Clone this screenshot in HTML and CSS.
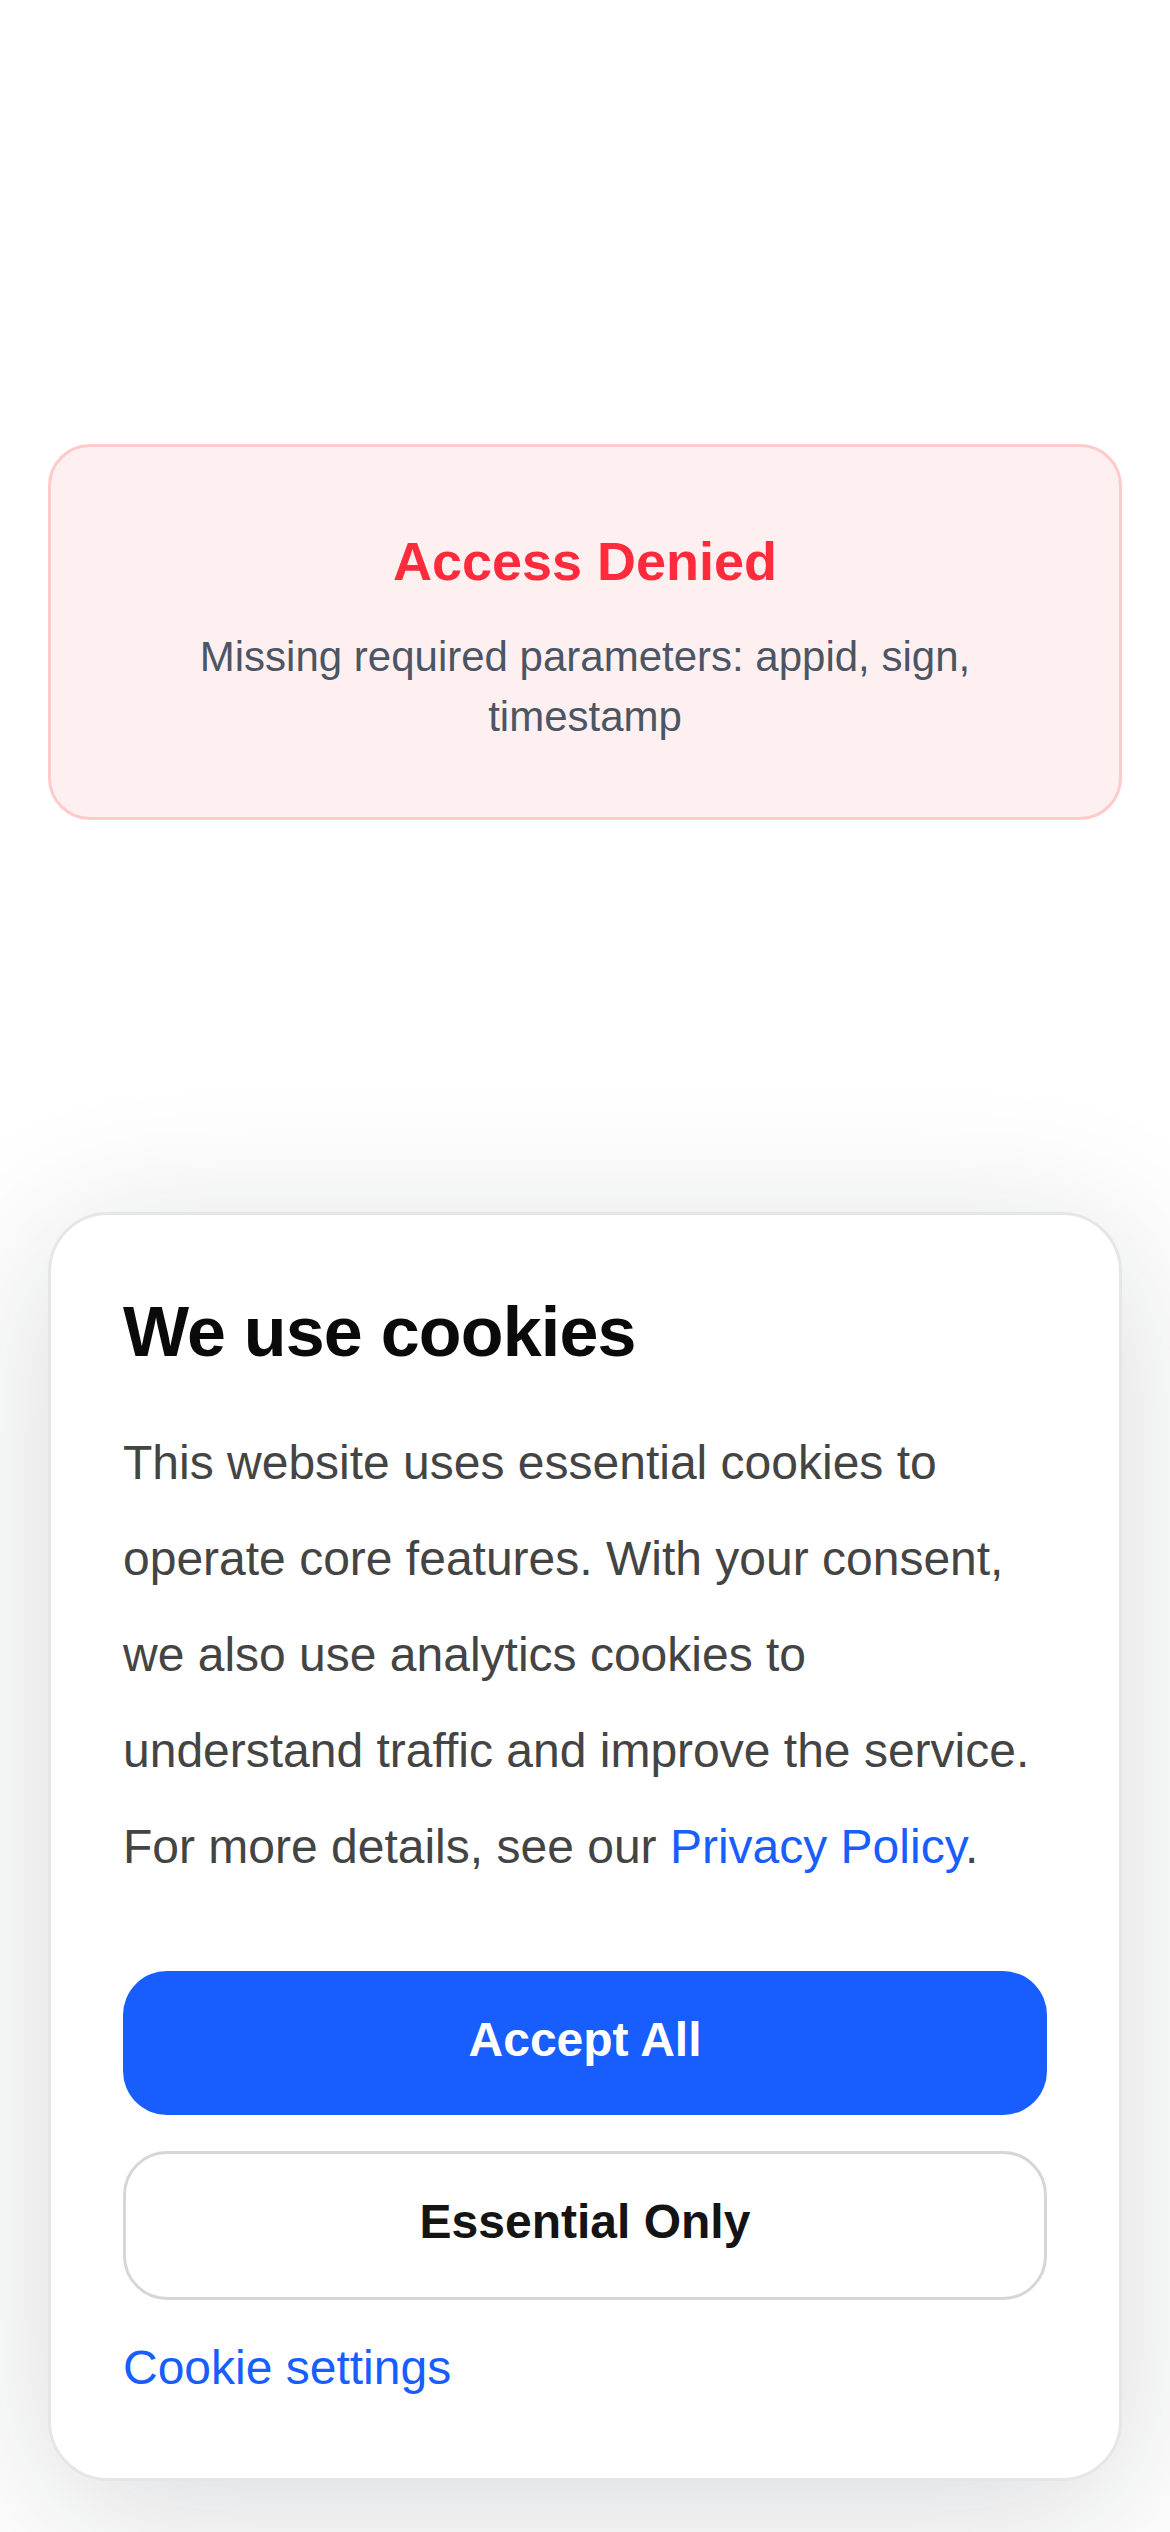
FILE: index.html
```html
<!DOCTYPE html>
<html lang="en">
<head>
<meta charset="utf-8">
<title>Access Denied</title>
<link rel="stylesheet" href="styles.css">
</head>
<body>
<main class="page">
  <section class="error-box">
    <h1 class="error-title">Access Denied</h1>
    <p class="error-msg">Missing required parameters: appid, sign, timestamp</p>
  </section>

  <section class="cookie-card">
    <h2 class="cookie-title">We use cookies</h2>
    <p class="cookie-text">This website uses essential cookies to operate core features. With your consent, we also use analytics cookies to understand traffic and improve the service. For more details, see our <a class="link" href="#">Privacy Policy</a>.</p>
    <button class="btn btn-primary">Accept All</button>
    <button class="btn btn-secondary">Essential Only</button>
    <a class="settings-link" href="#">Cookie settings</a>
  </section>
</main>
</body>
</html>
```

FILE: styles.css
```css
html, body {
  margin: 0;
  padding: 0;
  background: #ffffff;
}

body {
  font-family: "Liberation Sans", Arial, sans-serif;
}

.page {
  display: flex;
  flex-direction: column;
  padding: 444px 48px 51px;
}

.error-box {
  box-sizing: border-box;
  height: 376px;
  border: 3px solid #fecaca;
  border-radius: 42px;
  background: #fef0f0;
  padding: 84px 72px 70px;
  text-align: center;
}

.error-title {
  margin: 0;
  font-size: 54px;
  line-height: 60px;
  font-weight: 700;
  color: #fd2b3b;
}

.error-msg {
  margin: 36px 0 0;
  font-size: 42px;
  line-height: 60px;
  color: #4b5563;
}

.cookie-card {
  margin-top: 392px;
  display: flex;
  flex-direction: column;
  border: 3px solid #e6e6e6;
  border-radius: 60px;
  background: #ffffff;
  padding: 75px 72px 80px;
  box-shadow: 0 30px 160px rgba(17, 24, 39, 0.16);
}

.cookie-title {
  margin: 0;
  font-size: 70px;
  line-height: 84px;
  font-weight: 700;
  letter-spacing: -0.8px;
  color: #0a0a0a;
}

.cookie-text {
  margin: 41px 0 0;
  font-size: 48px;
  line-height: 96px;
  color: #444444;
}

.link {
  color: #185eff;
  text-decoration: none;
}

.btn {
  box-sizing: border-box;
  width: 100%;
  font-family: "Liberation Sans", Arial, sans-serif;
  font-size: 48px;
  font-weight: 700;
  border-radius: 44px;
  padding: 0 0 8px;
  cursor: pointer;
}

.btn-primary {
  margin-top: 76px;
  height: 144px;
  border: none;
  background: #185eff;
  color: #ffffff;
}

.btn-secondary {
  margin-top: 36px;
  height: 149px;
  border: 3px solid #d6d6d6;
  background: #ffffff;
  color: #141414;
}

.settings-link {
  margin-top: 38px;
  font-size: 48px;
  line-height: 60px;
  color: #185eff;
  text-decoration: none;
}
```
